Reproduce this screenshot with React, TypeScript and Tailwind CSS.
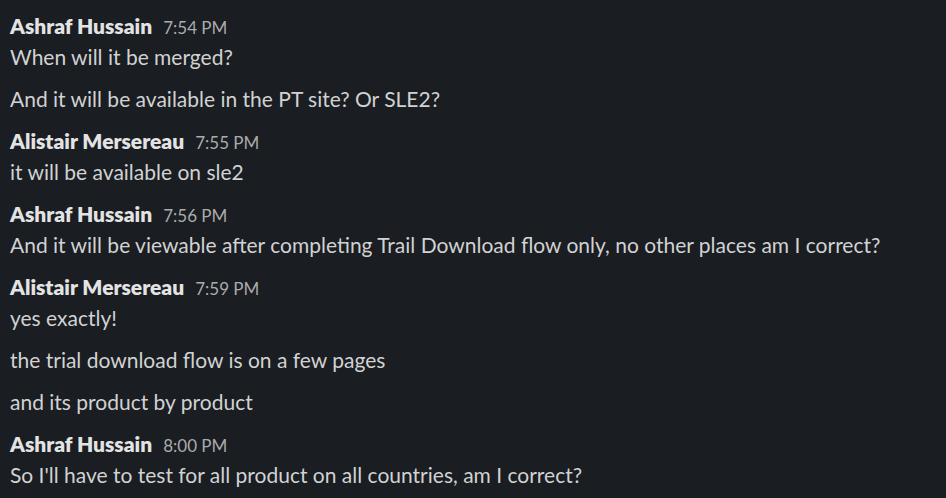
const messages = [
  { name: "Ashraf Hussain", time: "7:54 PM", lines: ["When will it be merged?", "And it will be available in the PT site? Or SLE2?"] },
  { name: "Alistair Mersereau", time: "7:55 PM", lines: ["it will be available on sle2"] },
  { name: "Ashraf Hussain", time: "7:56 PM", lines: ["And it will be viewable after completing Trail Download flow only, no other places am I correct?"] },
  { name: "Alistair Mersereau", time: "7:59 PM", lines: ["yes exactly!", "the trial download flow is on a few pages", "and its product by product"] },
  { name: "Ashraf Hussain", time: "8:00 PM", lines: ["So I'll have to test for all product on all countries, am I correct?"] },
];

export default function App() {
  return (
    <div
      className="w-[946px] h-[498px] overflow-hidden bg-[#1a1d21] px-[10px] pt-[10px] text-[#d1d2d3]"
      style={{ fontFamily: "Lato, 'Liberation Sans', sans-serif" }}
    >
      {messages.map((m, i) => (
        <div key={i} className="mb-[11px]">
          <div className="flex h-[31px] items-baseline gap-[11px] leading-[31px]">
            <span className="text-[21px] font-extrabold text-[#e3e3e4]">{m.name}</span>
            <span className="text-[17px] leading-[24px] text-[#ababad]">{m.time}</span>
          </div>
          <div className="flex flex-col gap-[11px]">
            {m.lines.map((l, j) => (
              <p key={j} className="text-[21px] leading-[31px]">{l}</p>
            ))}
          </div>
        </div>
      ))}
    </div>
  );
}
